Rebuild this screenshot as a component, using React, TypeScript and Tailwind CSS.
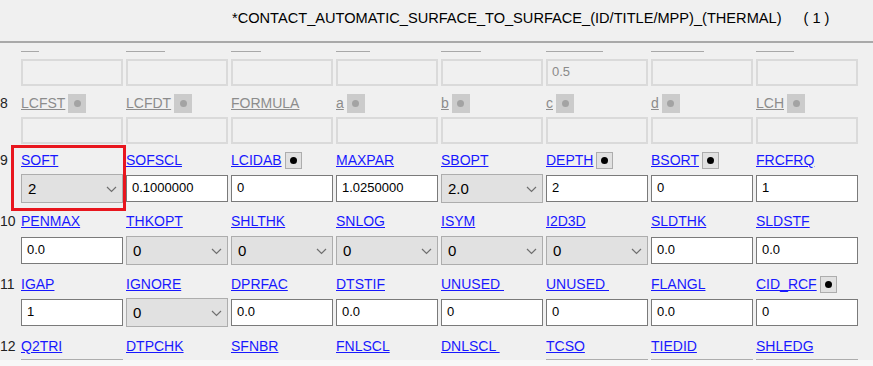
import React from 'react';

type Cell =
    | { kind: 'input'; value: string }
    | { kind: 'select'; value: string }
    | { kind: 'off'; value?: string };

type Row = {
    num: string;
    labels: { text: string; box?: boolean }[];
    cells: Cell[];
    labelMt: string;
    inputMt: string;
    disabled?: boolean;
};

const inp = (value: string): Cell => ({ kind: 'input', value });
const sel = (value: string): Cell => ({ kind: 'select', value });

const rows: Row[] = [
    {
        num: '8',
        disabled: true,
        labelMt: 'mt-[7px]',
        inputMt: 'mt-[4px]',
        labels: [
            { text: 'LCFST', box: true },
            { text: 'LCFDT', box: true },
            { text: 'FORMULA' },
            { text: 'a', box: true },
            { text: 'b', box: true },
            { text: 'c', box: true },
            { text: 'd', box: true },
            { text: 'LCH', box: true },
        ],
        cells: Array.from({ length: 8 }, () => ({ kind: 'off' } as Cell)),
    },
    {
        num: '9',
        labelMt: 'mt-[6px]',
        inputMt: 'mt-[5px]',
        labels: [
            { text: 'SOFT' },
            { text: 'SOFSCL' },
            { text: 'LCIDAB', box: true },
            { text: 'MAXPAR' },
            { text: 'SBOPT' },
            { text: 'DEPTH', box: true },
            { text: 'BSORT', box: true },
            { text: 'FRCFRQ' },
        ],
        cells: [sel('2'), inp('0.1000000'), inp('0'), inp('1.0250000'), sel('2.0'), inp('2'), inp('0'), inp('1')],
    },
    {
        num: '10',
        labelMt: 'mt-[8px]',
        inputMt: 'mt-[6px]',
        labels: [
            { text: 'PENMAX' },
            { text: 'THKOPT' },
            { text: 'SHLTHK' },
            { text: 'SNLOG' },
            { text: 'ISYM' },
            { text: 'I2D3D' },
            { text: 'SLDTHK' },
            { text: 'SLDSTF' },
        ],
        cells: [inp('0.0'), sel('0'), sel('0'), sel('0'), sel('0'), sel('0'), inp('0.0'), inp('0.0')],
    },
    {
        num: '11',
        labelMt: 'mt-[9px]',
        inputMt: 'mt-[5px]',
        labels: [
            { text: 'IGAP' },
            { text: 'IGNORE' },
            { text: 'DPRFAC' },
            { text: 'DTSTIF' },
            { text: 'UNUSED ' },
            { text: 'UNUSED ' },
            { text: 'FLANGL' },
            { text: 'CID_RCF', box: true },
        ],
        cells: [inp('1'), sel('0'), inp('0.0'), inp('0.0'), inp('0'), inp('0'), inp('0.0'), inp('0')],
    },
    {
        num: '12',
        labelMt: 'mt-[9px]',
        inputMt: 'mt-[4px]',
        labels: [
            { text: 'Q2TRI' },
            { text: 'DTPCHK' },
            { text: 'SFNBR' },
            { text: 'FNLSCL' },
            { text: 'DNLSCL ' },
            { text: 'TCSO' },
            { text: 'TIEDID' },
            { text: 'SHLEDG' },
        ],
        cells: [sel(''), inp(''), inp(''), inp(''), inp(''), sel(''), sel(''), sel('')],
    },
];

const dashWidths = ['w-[18px]', 'w-[39px]', 'w-[30px]', 'w-[34px]', 'w-[40px]', 'w-[57px]', 'w-[53px]', 'w-[38px]'];

function Chevron() {
    return (
        <svg width="11" height="7" viewBox="0 0 11 7" className="absolute right-[5px] top-[11px]">
            <polyline points="1,1 5.5,5.5 10,1" fill="none" stroke="#6f6f6f" strokeWidth="1.2" />
        </svg>
    );
}

function CheckBox({ active }: { active: boolean }) {
    return active ? (
        <span className="ml-[3px] flex h-[17px] w-[17px] items-center justify-center border border-[#adadad] bg-[#e1e1e1]">
            <span className="h-[7px] w-[7px] rounded-full bg-black" />
        </span>
    ) : (
        <span className="ml-[3px] flex h-[19px] w-[18px] items-center justify-center bg-[#cbcbcb]">
            <span className="h-[7px] w-[7px] rounded-full bg-[#a3a3a3]" />
        </span>
    );
}

function Field({ cell }: { cell: Cell }) {
    if (cell.kind === 'select') {
        return (
            <div className="relative -mt-px h-[29px] border border-[#adadad] bg-[#e1e1e1] pl-[6px] pt-[5px] text-[15px] leading-[17px] text-black">
                {cell.value}
                <Chevron />
            </div>
        );
    }
    if (cell.kind === 'off') {
        return (
            <div className="h-[27px] border-2 border-[#dadada] bg-[#f0f0f0] pl-[4px] pt-[3px] text-[13px] leading-[15px] text-[#8a8a8a]">
                {cell.value}
            </div>
        );
    }
    return (
        <div className="h-[27px] border border-[#7a7a7a] bg-white pl-[5px] pt-[4px] text-[13px] leading-[15px] text-black">
            {cell.value}
        </div>
    );
}

export default function App() {
    return (
        <div className="relative h-[366px] w-[873px] overflow-hidden bg-[#f0f0f0] font-['Liberation_Sans',Arial,sans-serif]">
            <div className="h-[360px] overflow-hidden">
                {/* Title Bar */}
                <header className="flex h-[43px] items-start border-b-2 border-[#a9a9a9] pl-[232px] pt-[10px] text-[14.6px] leading-[16px] text-black">
                    <span>*CONTACT_AUTOMATIC_SURFACE_TO_SURFACE_(ID/TITLE/MPP)_(THERMAL)</span>
                    <span className="ml-[22px] whitespace-pre">( 1 )</span>
                </header>

                {/* Row 7 (greyed out, no labels) */}
                <div className="pl-[21px] pt-[8px]">
                    <div className="grid grid-cols-[repeat(8,102px)] gap-x-[3px]">
                        {dashWidths.map((w, i) => (
                            <div key={i} className={`h-px ${w} bg-[#a8a8a8]`} />
                        ))}
                    </div>
                    <div className="mt-[7px] grid grid-cols-[repeat(8,102px)] gap-x-[3px]">
                        {dashWidths.map((_, i) => (
                            <Field key={i} cell={{ kind: 'off', value: i === 5 ? '0.5' : '' }} />
                        ))}
                    </div>
                </div>

                {rows.map((row) => (
                    <div key={row.num}>
                        <div className={`flex h-[20px] items-center ${row.labelMt}`}>
                            <div className="w-[21px] text-[14px] leading-[16px] text-[#222]">{row.num}</div>
                            <div className="grid grid-cols-[repeat(8,102px)] gap-x-[3px]">
                                {row.labels.map((l, i) => (
                                    <div key={i} className="flex items-center">
                                        <span
                                            className={`whitespace-pre text-[14px] leading-[16px] underline ${
                                                row.disabled ? 'text-[#8c8c8c]' : 'text-[#1818ff]'
                                            }`}
                                        >
                                            {l.text}
                                        </span>
                                        {l.box && <CheckBox active={!row.disabled} />}
                                    </div>
                                ))}
                            </div>
                        </div>
                        <div className={`pl-[21px] ${row.inputMt}`}>
                            <div className="grid grid-cols-[repeat(8,102px)] items-start gap-x-[3px]">
                                {row.cells.map((c, i) => (
                                    <Field key={i} cell={c} />
                                ))}
                            </div>
                        </div>
                    </div>
                ))}
            </div>
            <div className="h-[6px] bg-[#f7f7f7]" />

            {/* Highlight around SOFT */}
            <div className="absolute left-[11px] top-[145px] h-[66px] w-[115px] border-[3px] border-[#e8161e]" />
        </div>
    );
}
